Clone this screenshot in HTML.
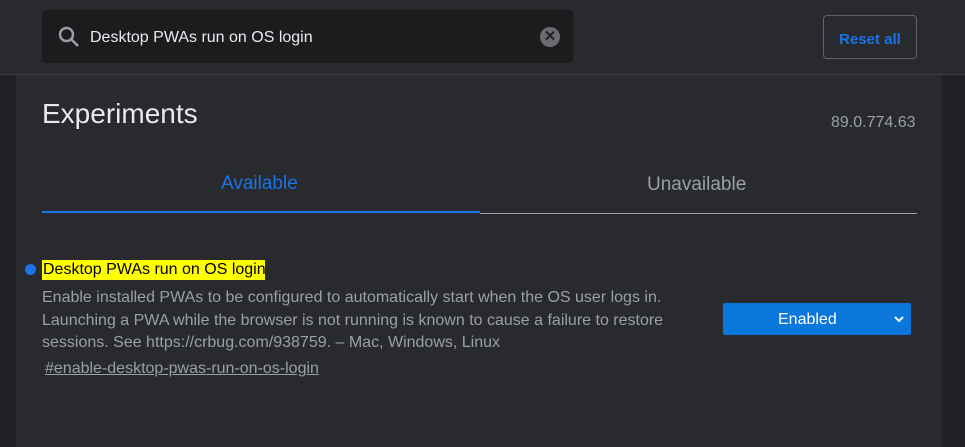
<!DOCTYPE html>
<html><head><style>
body{margin:0;width:965px;height:447px;background:#202124;font-family:"Liberation Sans",Arial,sans-serif;overflow:hidden;position:relative}
.hdr{position:absolute;left:0;top:0;width:965px;height:74px;background:#292a2d;border-bottom:1px solid #3c3d40}
.search{position:absolute;left:42px;top:10px;width:531px;height:53px;background:#1c1c1f;border-radius:4px}
.search span{position:absolute;left:48px;top:19px;color:#e8eaed;font-size:16px}
.clr{position:absolute;left:498px;top:17px;width:20px;height:20px;border-radius:50%;background:#6b6c70;color:#222;font-size:15px;text-align:center;line-height:20px;font-weight:bold}
.reset{position:absolute;left:823px;top:15px;border:1px solid #5f6368;border-radius:4px;color:#1a73e8;font-size:15px;font-weight:bold;text-align:center;line-height:47px;box-sizing:border-box;width:94px;height:44px}
.panel{position:absolute;left:16px;top:75px;width:926px;height:372px;background:#292a2d}
.t{position:absolute;white-space:nowrap}
</style></head><body>
<div class="hdr">
<div class="search">
<svg style="position:absolute;left:16px;top:16px" width="22" height="22" viewBox="0 0 22 22"><circle cx="8.5" cy="8.5" r="6.5" fill="none" stroke="#9aa0a6" stroke-width="2.4"/><line x1="13.5" y1="13.5" x2="20" y2="20" stroke="#9aa0a6" stroke-width="2.6"/></svg>
<span>Desktop PWAs run on OS login</span>
<div class="clr">✕</div>
</div>
<div class="reset">Reset all</div>
</div>
<div class="panel"></div>
<div class="t" style="left:42px;top:98px;font-size:28px;color:#e8eaed">Experiments</div>
<div class="t" style="left:831px;top:114px;font-size:16px;color:#9aa0a6">89.0.774.63</div>
<div class="t" style="left:221px;top:173px;font-size:19px;color:#1a73e8">Available</div>
<div class="t" style="left:647px;top:174px;font-size:19px;color:#9aa0a6">Unavailable</div>
<div class="t" style="left:42px;top:211px;width:438px;height:2px;background:#1a73e8"></div>
<div class="t" style="left:480px;top:213px;width:437px;height:1px;background:#9aa0a6"></div>
<div class="t" style="left:25px;top:264px;width:11px;height:11px;border-radius:50%;background:#1a73e8"></div>
<div class="t" style="left:42px;top:260px;width:223px;height:20px;background:#ffff00"></div>
<div class="t" style="left:43px;top:261px;font-size:16px;color:#000">Desktop PWAs run on OS login</div>
<div class="t" style="left:42px;top:287px;font-size:16px;line-height:22.5px;color:#9aa0a6">Enable installed PWAs to be configured to automatically start when the OS user logs in.<br>Launching a PWA while the browser is not running is known to cause a failure to restore<br>sessions. See https://crbug.com/938759. – Mac, Windows, Linux</div>
<div class="t" style="left:45px;top:360px;font-size:16px;color:#9aa0a6;text-decoration:underline">#enable-desktop-pwas-run-on-os-login</div>
<div class="t" style="left:723px;top:303px;width:188px;height:32px;background:#0b76db;border-radius:2px"></div>
<div class="t" style="left:778px;top:311px;font-size:16px;color:#fff">Enabled</div>
<svg class="t" style="left:893px;top:314px" width="12" height="10" viewBox="0 0 12 10"><path d="M2 3 L6 7 L10 3" fill="none" stroke="#fff" stroke-width="2"/></svg>
</body></html>
